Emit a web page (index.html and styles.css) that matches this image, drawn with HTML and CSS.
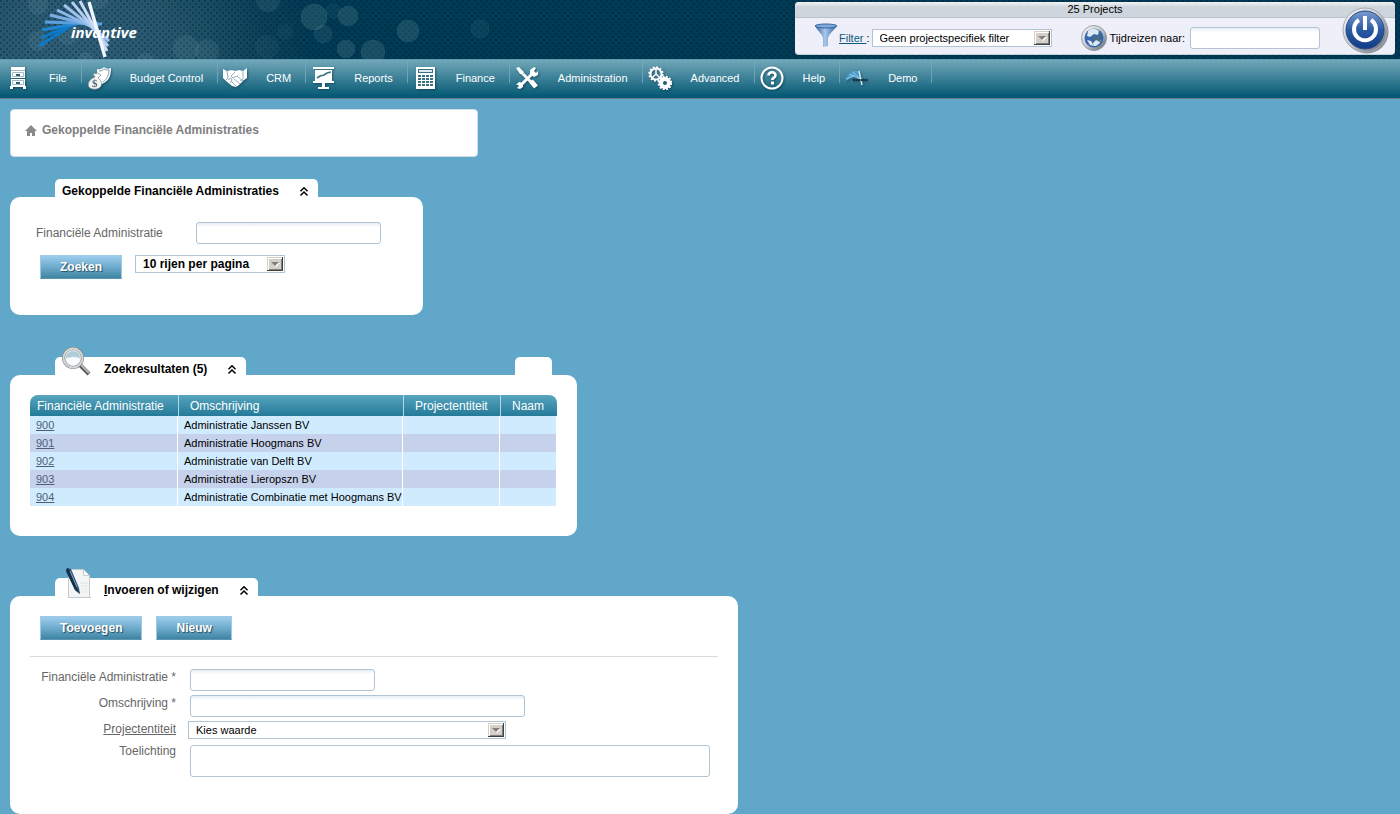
FILE: index.html
```html
<!DOCTYPE html>
<html lang="nl">
<head>
<meta charset="utf-8">
<title>Gekoppelde Financiële Administraties</title>
<link rel="stylesheet" href="styles.css">
</head>
<body>
<svg class="defs" width="0" height="0" aria-hidden="true">
  <defs>
    <symbol id="chevrons" viewBox="0 0 10 10"><path d="M1.500 4.300 5 .8l3.500 3.500M1.500 8.500 5 5l3.500 3.500" fill="none" stroke="#000" stroke-width="1.500"/></symbol>
    <symbol id="arrow" viewBox="0 0 16 14">
      <path fill="#d4d0c8" d="M0 0h16v14H0z"/><path fill="#fff" d="M1 1h14v1H2v11H1z"/>
      <path fill="#808080" d="M14 2h1v11H2v-1h12z"/><path fill="#404040" d="M15 0h1v14H0v-1h15z"/>
      <path fill="#fff" d="M5 6h8L9 10z"/><path fill="#808080" d="M4 5h8L8 9z"/>
    </symbol>
    <linearGradient id="blue" x1="0" y1="0" x2="0" y2="1"><stop offset="0" stop-color="#7b9ccf"/><stop offset=".5" stop-color="#2b5aa5"/><stop offset="1" stop-color="#123c85"/></linearGradient>
    <linearGradient id="chrome" x1="0" y1="0" x2="1" y2="1"><stop offset="0" stop-color="#fff"/><stop offset=".5" stop-color="#c4c8cf"/><stop offset="1" stop-color="#5d636d"/></linearGradient>
    <linearGradient id="funnel" x1="0" y1="0" x2="1" y2="0"><stop offset="0" stop-color="#2d5e9a"/><stop offset=".45" stop-color="#a9c8ea"/><stop offset="1" stop-color="#2f63a3"/></linearGradient>
  </defs>
</svg>

<header class="banner">
  <svg class="bubbles" width="490" height="59" viewBox="0 0 490 59" aria-hidden="true">
    <g fill="#8ab4bd" fill-opacity=".12">
      <circle cx="38" cy="5" r="10"/><circle cx="98" cy="-2" r="11"/><circle cx="38" cy="41" r="10"/><circle cx="68" cy="34" r="11"/>
      <circle cx="86" cy="60" r="8"/><circle cx="146" cy="63" r="10"/><circle cx="186" cy="48" r="13"/><circle cx="207" cy="51" r="12"/>
      <circle cx="268" cy="0" r="12"/><circle cx="285" cy="32" r="8" fill-opacity=".06"/><circle cx="267" cy="47" r="12" fill-opacity=".06"/>
    </g>
    <g fill="#8fc0c0" fill-opacity=".17" stroke="#8fc0c0" stroke-opacity=".08">
      <circle cx="314" cy="17" r="13"/><circle cx="348" cy="16" r="10"/><circle cx="333" cy="11" r="7" fill-opacity=".06"/>
      <circle cx="323" cy="34" r="9" fill-opacity=".1"/><circle cx="346" cy="49" r="9"/><circle cx="373" cy="52" r="12"/>
      <circle cx="408" cy="31" r="11"/><circle cx="480" cy="29" r="9" fill-opacity=".08"/>
    </g>
  </svg>
  <a class="logo" href="#" aria-label="invantive">
    <svg width="110" height="59" viewBox="0 0 110 59">
      <g fill="none" stroke-width="2.900">
        <path stroke="#0a7acb" d="M9 46 44 24"/><path stroke="#0a7acb" d="M11 38 50 21"/><path stroke="#1f86d2" d="M12 30 56 22"/>
        <path stroke="#5a9fe0" d="M15 22 72 24"/><path stroke="#7aaeE6" d="M20 15 68 27"/>
        <path stroke="#8db9ea" d="M27 10 68 30"/><path stroke="#a0c3ee" d="M34 5 79 41"/>
        <path stroke="#b4cff3" d="M42 2 78 46"/><path stroke="#c9dcf7" d="M50 1 77 51"/>
        <path stroke="#f1f4fe" stroke-width="3.400" d="M59 2 75 57"/>
      </g>
      <text class="logo-text" x="41" y="38">invantive</text>
    </svg>
  </a>
  <div class="session">
    <div class="session-title">25 Projects</div>
    <div class="session-tools">
      <svg class="funnel" width="24" height="26" viewBox="0 0 24 26" aria-hidden="true">
        <path d="M1 3c3 5 7 8 8 12v9l5-1v-8c1-4 6-8 9-12z" fill="url(#funnel)"/><ellipse cx="12" cy="3" rx="11" ry="2" fill="#7fa9d8" stroke="#35659f"/>
      </svg>
      <label class="tool-label" for="filter"><a href="#">Filter </a>:</label>
      <span class="select filter-select"><select id="filter"><option>Geen projectspecifiek filter</option></select><svg width="16" height="14" aria-hidden="true"><use href="#arrow"/></svg></span>
      <svg class="globe" width="26" height="26" viewBox="0 0 26 26" aria-hidden="true">
        <circle cx="13" cy="13" r="12.500" fill="url(#chrome)" stroke="#858b96" stroke-width=".8"/><circle cx="13" cy="13" r="9.500" fill="#3768ac"/>
        <path fill="#dce8f2" d="M7 6c3-3 8-3 11 0l-1 4-4-1-4 3-3-1zM6 15l4 1 3 5-4-1zM15 15l5 0c-1 4-4 6-7 6l-1-3z"/><path fill="#4e6b7c" d="m11 13 10-4-3 4 3 5z"/>
      </svg>
      <label class="tool-label" for="travel">Tijdreizen naar:</label>
      <input class="field travel-field" id="travel" type="text">
    </div>
    <button class="power" type="button" aria-label="Afmelden">
      <svg width="50" height="50" viewBox="0 0 50 50">
        <circle cx="25" cy="27" r="21.500" fill="#1c2530" fill-opacity=".45"/><circle cx="23" cy="25" r="22" fill="url(#chrome)" stroke="#a2a8b1"/>
        <circle cx="23" cy="25" r="19" fill="url(#blue)" stroke="#27497f"/>
        <path d="M17 15a11 11 0 1 0 12 0" fill="none" stroke="#fff" stroke-width="4"/><path d="M23 11v14" stroke="#fff" stroke-width="4"/>
      </svg>
    </button>
  </div>
</header>

<nav class="menu">
  <a href="#"><svg viewBox="0 0 24 24" aria-hidden="true"><path fill="#fff" d="M5 1h14v3H5zM5 5h14v7H5zM5 13h14v7H5zM4 20h3v3H4zM17 20h3v3h-3zM7 20h10v1H7z"/><path fill="none" stroke="#9dbac5" d="M5 4.500h14M6.500 6.500h11v4h-11zM6.500 14.500h11v4h-11z"/><path fill="#315e73" d="M10 8h4v2h-4zM10 16h4v2h-4z"/></svg>File</a>
  <a href="#"><svg viewBox="0 0 24 24" aria-hidden="true"><path fill="#fff" d="M10 3c4 1 6-1 7-2 2 2 5 2 7 1 0 8-2 13-9 16-4-4-5-9-5-15z"/><path fill="none" stroke="#7c9aa6" d="M12 5c3 0 4-1 5-2 2 1 3 1 5 1 0 5-2 9-6 12"/><path fill="#f4f4f4" stroke="#8b9ba2" stroke-width=".8" d="M8 11 6 8l5-1 3 2-3 3c4 3 4 5 3 8-2 4-10 4-12 1-2-4 1-8 6-10z"/><text class="coin" x="5" y="21">$</text></svg>Budget Control</a>
  <a href="#"><svg viewBox="0 0 24 24" aria-hidden="true"><path fill="#fff" d="m0 3 4 2 5-1 3 1 4-1 4 1 4-3v10l-3 2-5 5-3 2-4-1-6-5-3-3z"/><path fill="none" stroke="#86a8b4" stroke-width=".9" d="m4 5 1 7-2 2M20 5v8l-3 2M12 6l-4 4 2 2 4-2 6 5M11 13l6 5M8 15l5 5M5 14l3-2 1 2-2 3"/></svg>CRM</a>
  <a href="#"><svg viewBox="0 0 24 24" aria-hidden="true"><path fill="#fff" d="M2 1h21v2H2zM4 4h17v11H4zM2 15h21v2H2zM11 17h3v4h4v2H7v-2h4z"/><path fill="none" stroke="#397184" stroke-width="1.600" d="m6 12 3-2 4-1 3-2 4-1"/></svg>Reports</a>
  <a href="#"><svg viewBox="0 0 24 24" aria-hidden="true"><path fill="#fff" d="M3 1h19v22H3z"/><path fill="#397184" d="M5 3h15v4H5z"/><path fill="#dce9ed" d="M6 4h13v2H6z"/><path stroke="#397184" stroke-width="2" stroke-dasharray="3 1" d="M5 10h15M5 13h15M5 16h15M5 19h15"/></svg>Finance</a>
  <a href="#"><svg viewBox="0 0 24 24" aria-hidden="true"><path stroke="#fff" stroke-width="3" d="M5 20 18 7M8 8l12 12"/><path stroke="#fff" stroke-width="5" d="m16 15 5 6"/><path fill="#fff" d="m1 2 3-1 5 5-1 3-3-1zM15 8V4l4-3 2 1-2 3 2 2 2-2v4l-4 2zM1 19l3-3 4 1v4l-3 2-3-1 2-2-1-1z"/></svg>Administration</a>
  <a href="#"><svg viewBox="0 0 24 24" aria-hidden="true"><circle cx="8" cy="8" r="5.500" fill="none" stroke="#fff" stroke-width="2"/><circle cx="8" cy="8" r="6.700" fill="none" stroke="#fff" stroke-width="2" stroke-dasharray="2 1.510"/><path d="M8 3v5l-4 4m4-4 4 4" fill="none" stroke="#fff" stroke-width="1.500"/><circle cx="17" cy="17" r="4" fill="none" stroke="#fff" stroke-width="4"/><circle cx="17" cy="17" r="6.300" fill="none" stroke="#fff" stroke-width="2" stroke-dasharray="2 1.300"/></svg>Advanced</a>
  <a href="#"><svg viewBox="0 0 24 24" aria-hidden="true"><circle cx="12" cy="12" r="10.500" fill="none" stroke="#fff" stroke-width="2"/><path d="M8.500 9.500c.2-4.200 7-4.200 7-.3 0 2.700-3.200 2-3.200 4.800" fill="none" stroke="#fff" stroke-width="2.600"/><path fill="#fff" d="M11 15.500h3v3h-3z"/></svg>Help</a>
  <a href="#"><svg viewBox="0 0 24 24" aria-hidden="true"><path fill="#4faee4" fill-opacity=".75" d="M0 15 3 9l5-4 6 0 3 9-8-3z"/><path stroke="#a9daf4" stroke-opacity=".7" d="m1 13 9-4M4 8l11 5M8 6l8 8"/><path stroke="#d8e5ee" stroke-width="1.500" d="m14 5 3 14"/><path stroke="#17323e" stroke-width="2" stroke-dasharray="2 .5" d="M8 14h15"/></svg>Demo</a>
</nav>

<main class="content">
  <div class="breadcrumb">
    <svg width="12" height="12" viewBox="0 0 12 12" aria-hidden="true"><path fill="#8a8a8a" d="m6 0 6 6h-2v5H7V8H5v3H2V6H0z"/></svg>
    <span>Gekoppelde Financiële Administraties</span>
  </div>

  <section class="panel search-panel">
    <div class="tabs">
      <div class="tab">
        <h2>Gekoppelde Financiële Administraties</h2>
        <button class="collapse" type="button" aria-label="Inklappen"><svg width="10" height="10"><use href="#chevrons"/></svg></button>
      </div>
    </div>
    <form class="panel-body search-form">
      <div class="search-row">
        <label class="form-label" for="search-admin">Financiële Administratie</label>
        <input class="field short-field" id="search-admin" type="text">
      </div>
      <div class="search-actions">
        <button class="button" type="button">Zoeken</button>
        <span class="select rows-select"><select aria-label="Rijen per pagina"><option>10 rijen per pagina</option></select><svg width="16" height="14" aria-hidden="true"><use href="#arrow"/></svg></span>
      </div>
    </form>
  </section>

  <section class="panel results-panel">
    <div class="tabs">
      <div class="tab icon-tab">
        <svg class="tab-icon" width="32" height="32" viewBox="0 0 32 32" aria-hidden="true"><path d="m18 19 9 9" stroke="#555" stroke-width="4"/><path d="m18 18 9 9" stroke="#b8b8b8" stroke-width="2"/><circle cx="11" cy="12" r="9.500" fill="#dce9ef" stroke="#8a8a8a" stroke-width="3"/><circle cx="11" cy="12" r="9.500" fill="none" stroke="#dadada" stroke-width="1.800"/><path d="M4 12c0-9 14-9 14 0-5-2-9-1-14 0z" fill="#aecbd8"/><path d="M4 13c5-2 9-2 14 0-1 8-12 9-14 0z" fill="#f8fbfc"/></svg>
        <h2>Zoekresultaten (5)</h2>
        <button class="collapse" type="button" aria-label="Inklappen"><svg width="10" height="10"><use href="#chevrons"/></svg></button>
      </div>
      <div class="tab blank-tab"></div>
    </div>
    <div class="panel-body">
      <table class="results">
        <colgroup><col class="col-admin"><col class="col-description"><col class="col-entity"><col class="col-name"></colgroup>
        <thead><tr><th>Financiële Administratie</th><th>Omschrijving</th><th>Projectentiteit</th><th>Naam</th></tr></thead>
        <tbody>
          <tr><td><a href="#">900</a></td><td>Administratie Janssen BV</td><td></td><td></td></tr>
          <tr><td><a href="#">901</a></td><td>Administratie Hoogmans BV</td><td></td><td></td></tr>
          <tr><td><a href="#">902</a></td><td>Administratie van Delft BV</td><td></td><td></td></tr>
          <tr><td><a href="#">903</a></td><td>Administratie Lieropszn BV</td><td></td><td></td></tr>
          <tr><td><a href="#">904</a></td><td>Administratie Combinatie met Hoogmans BV</td><td></td><td></td></tr>
        </tbody>
      </table>
    </div>
  </section>

  <section class="panel edit-panel">
    <div class="tabs">
      <div class="tab icon-tab">
        <svg class="tab-icon" width="32" height="32" viewBox="0 0 32 32" aria-hidden="true"><path fill="#b9bdc0" d="M6 30h23v1H6z"/><path fill="#f3f4f5" stroke="#c6cacd" d="M6.500 2.500h15l6 6v22h-21z"/><path fill="#fff" stroke="#c9cccf" d="M21.500 2.500v6h6z"/><path stroke="#dcdee0" stroke-dasharray="2 1" d="M18 16h8M19 19h7M20 22h6M20 25h6"/><path fill="#2a5575" d="m5 1 4 1 8 19 1 6-5-4L4 4z"/><path fill="#173047" d="m5 1 2 1 8 20 3 5-5-4L4 4z"/><path stroke="#75a4c4" d="m8 4 7 16"/></svg>
        <h2><u>I</u>nvoeren of wijzigen</h2>
        <button class="collapse" type="button" aria-label="Inklappen"><svg width="10" height="10"><use href="#chevrons"/></svg></button>
      </div>
    </div>
    <form class="panel-body edit-form">
      <div class="edit-actions">
        <button class="button" type="button">Toevoegen</button>
        <button class="button" type="button">Nieuw</button>
      </div>
      <div class="edit-fields">
        <label class="form-label" for="admin">Financiële Administratie *</label>
        <input class="field short-field" id="admin" type="text">
        <label class="form-label" for="description">Omschrijving *</label>
        <input class="field medium-field" id="description" type="text">
        <label class="form-label" for="entity"><a href="#">Projectentiteit</a></label>
        <span class="select entity-select"><select id="entity"><option>Kies waarde</option></select><svg width="16" height="14" aria-hidden="true"><use href="#arrow"/></svg></span>
        <label class="form-label" for="notes">Toelichting</label>
        <textarea class="field notes-field" id="notes"></textarea>
      </div>
    </form>
  </section>
</main>
</body>
</html>
```

FILE: styles.css
```css
* { box-sizing: border-box; }

body {
  margin: 0;
  background: #61a7ca;
  color: #000;
  font: 11px/16px "Liberation Sans", Arial, sans-serif;
}

button, input, select, textarea { font: inherit; color: inherit; margin: 0; }
svg { display: block; flex: none; }
.defs { position: absolute; }

/* Banner */
.banner {
  position: relative;
  display: flex;
  justify-content: space-between;
  align-items: flex-start;
  height: 59px;
  padding: 2px 5px 0 0;
  background:
    radial-gradient(circle at 1px 1px, rgba(0, 25, 45, .35) 0 1px, transparent 1px) 0 0 / 6px 6px,
    radial-gradient(circle at 1px 1px, rgba(0, 25, 45, .35) 0 1px, transparent 1px) 3px 3px / 6px 6px,
    radial-gradient(circle at 80px 70px, #2f5f78 0, #28586f 90px, #1c5065 130px, #0b4059 190px, #003a55 240px);
}
.bubbles { position: absolute; left: 0; top: 0; }
.logo { position: relative; margin: -2px 0 0 30px; }
.logo-text { fill: #fff; font: italic bold 15px "Open Sans", sans-serif; }

.session {
  position: relative;
  width: 600px;
  border-radius: 4px;
  background: #eeeff8;
  border-bottom: 1px solid #c3d0d9;
}
.session-title {
  height: 16px;
  line-height: 14px;
  text-align: center;
  border-bottom: 1px solid #b9c3ca;
  border-radius: 4px 4px 0 0;
  background: linear-gradient(#f2f4f6, #ced5dc 5px);
}
.session-tools { display: flex; align-items: center; height: 36px; padding: 3px 75px 0 19px; }
.tool-label { white-space: nowrap; }
.tool-label a { color: #0e5a7a; white-space: pre; }
.funnel { margin: -4px 1px 0 0; }
.filter-select { width: 180px; margin-left: 2px; }
.globe { margin: 0 3px 0 29px; }
.travel-field { width: 130px; margin-left: auto; }
.power { position: absolute; right: 3px; top: 3px; padding: 0; border: 0; background: none; }

/* Menu */
.menu {
  display: flex;
  height: 40px;
  padding-left: 1px;
  border-top: 1px solid #5f9bb0;
  border-bottom: 1px solid #667a85;
  background: linear-gradient(#72a7b9, #005672);
}
.menu a {
  display: flex;
  align-items: center;
  gap: 19px;
  height: 36px;
  padding: 0 14px 0 5px;
  border-right: 1px solid;
  border-image: linear-gradient(#72a7b9, #6fa1b4 60%, transparent 66%) 1;
  color: #fff;
  text-decoration: none;
}
.menu svg { width: 24px; height: 24px; filter: drop-shadow(1px 1px 1px rgba(0, 40, 60, .5)); }
.coin { fill: #506b78; font: bold 11px "Liberation Serif", serif; }

/* Panels */
.content { padding: 10px 10px 0; }
.breadcrumb {
  display: flex;
  align-items: flex-start;
  gap: 5px;
  max-width: 468px;
  height: 48px;
  padding: 12px 14px;
  border: 1px solid #d3dde3;
  border-radius: 4px;
  background: #fff;
  color: #7e7e7e;
  font-size: 12px;
  font-weight: bold;
}
.breadcrumb svg { margin-top: 3px; }

.panel { margin-top: 42px; }
.search-panel { max-width: 413px; margin-top: 22px; }
.results-panel { max-width: 567px; }
.edit-panel { max-width: 728px; }

.tabs { display: flex; justify-content: space-between; padding: 0 25px 0 45px; }
.tab {
  position: relative;
  display: flex;
  gap: 20px;
  height: 18px;
  padding: 0 9px 0 7px;
  border-radius: 5px 5px 0 0;
  background: #fff;
}
.tab h2 { margin: 0; font-size: 12px; line-height: 24px; }
.icon-tab { padding-left: 49px; }
.tab-icon { position: absolute; left: 7px; bottom: -3px; }
.blank-tab { width: 37px; padding: 0; }
.collapse { padding: 7px 0 0; border: 0; background: none; height: 18px; }

.panel-body { padding: 20px; border-radius: 10px; background: #fff; }
.results-panel .panel-body { padding-bottom: 30px; }

/* Form controls */
.form-label { color: #666; font-size: 12px; }
.form-label a { color: inherit; }
.field {
  display: block;
  height: 22px;
  padding: 2px 5px;
  border: 1px solid #b0c4d4;
  border-radius: 3px;
  background: linear-gradient(#e6edf3, #fff 4px);
}
.short-field { width: 185px; }
.medium-field { width: 335px; }
.notes-field { width: 520px; height: 32px; margin-top: 2px; resize: none; background: #fff; }

.select { position: relative; display: block; }
.select select {
  display: block;
  width: 100%;
  height: 18px;
  padding: 0 20px 0 7px;
  border: 1px solid #b0c4d4;
  border-radius: 0;
  background: #fff;
  appearance: none;
}
.select svg { position: absolute; right: 2px; top: 2px; pointer-events: none; }

.button {
  height: 24px;
  padding: 0 19px;
  border: 1px solid #9fcbe2;
  border-bottom-color: #5c95b0;
  background: linear-gradient(#9dcdee, #6eabcc 50%, #3f84a3);
  color: #fff;
  font-size: 12px;
  font-weight: bold;
  text-shadow: 1px 1px 1px #234c63;
}

.search-form { padding: 25px 26px 36px; }
.search-row { display: grid; grid-template-columns: 160px 1fr; align-items: center; }
.search-actions { display: flex; align-items: flex-start; gap: 13px; padding: 11px 4px 0; }
.rows-select { width: 150px; font-size: 12px; font-weight: bold; }

/* Results */
.results { width: 100%; border-collapse: separate; border-spacing: 0; table-layout: fixed; }
.col-admin { width: 148px; }
.col-description { width: 225px; }
.col-entity { width: 97px; }
.results th {
  height: 21px;
  padding: 0 0 0 11px;
  border-left: 1px solid #b5d5e0;
  background: linear-gradient(#58a5bf, #247a98);
  color: #fff;
  font-size: 12px;
  font-weight: normal;
  text-align: left;
}
.results th:first-child { padding-left: 7px; border-left: 0; border-top-left-radius: 8px; }
.results th:last-child { border-top-right-radius: 8px; }
.results td {
  height: 18px;
  padding: 0 0 0 6px;
  border-right: 1px solid #fff;
  background: #d0ebfe;
  white-space: nowrap;
}
.results tr:nth-child(even) td { background: #c6d1ec; }
.results td a { color: #4e5f76; }

/* Edit form */
.edit-form { padding-bottom: 37px; }
.edit-actions { display: flex; gap: 14px; padding: 0 10px 16px; border-bottom: 1px solid #d9d9d9; }
.edit-fields {
  display: grid;
  grid-template-columns: 146px 1fr;
  column-gap: 14px;
  row-gap: 4px;
  padding-top: 12px;
}
.edit-fields .form-label { text-align: right; }
.entity-select { width: 318px; margin-left: -2px; }
```
